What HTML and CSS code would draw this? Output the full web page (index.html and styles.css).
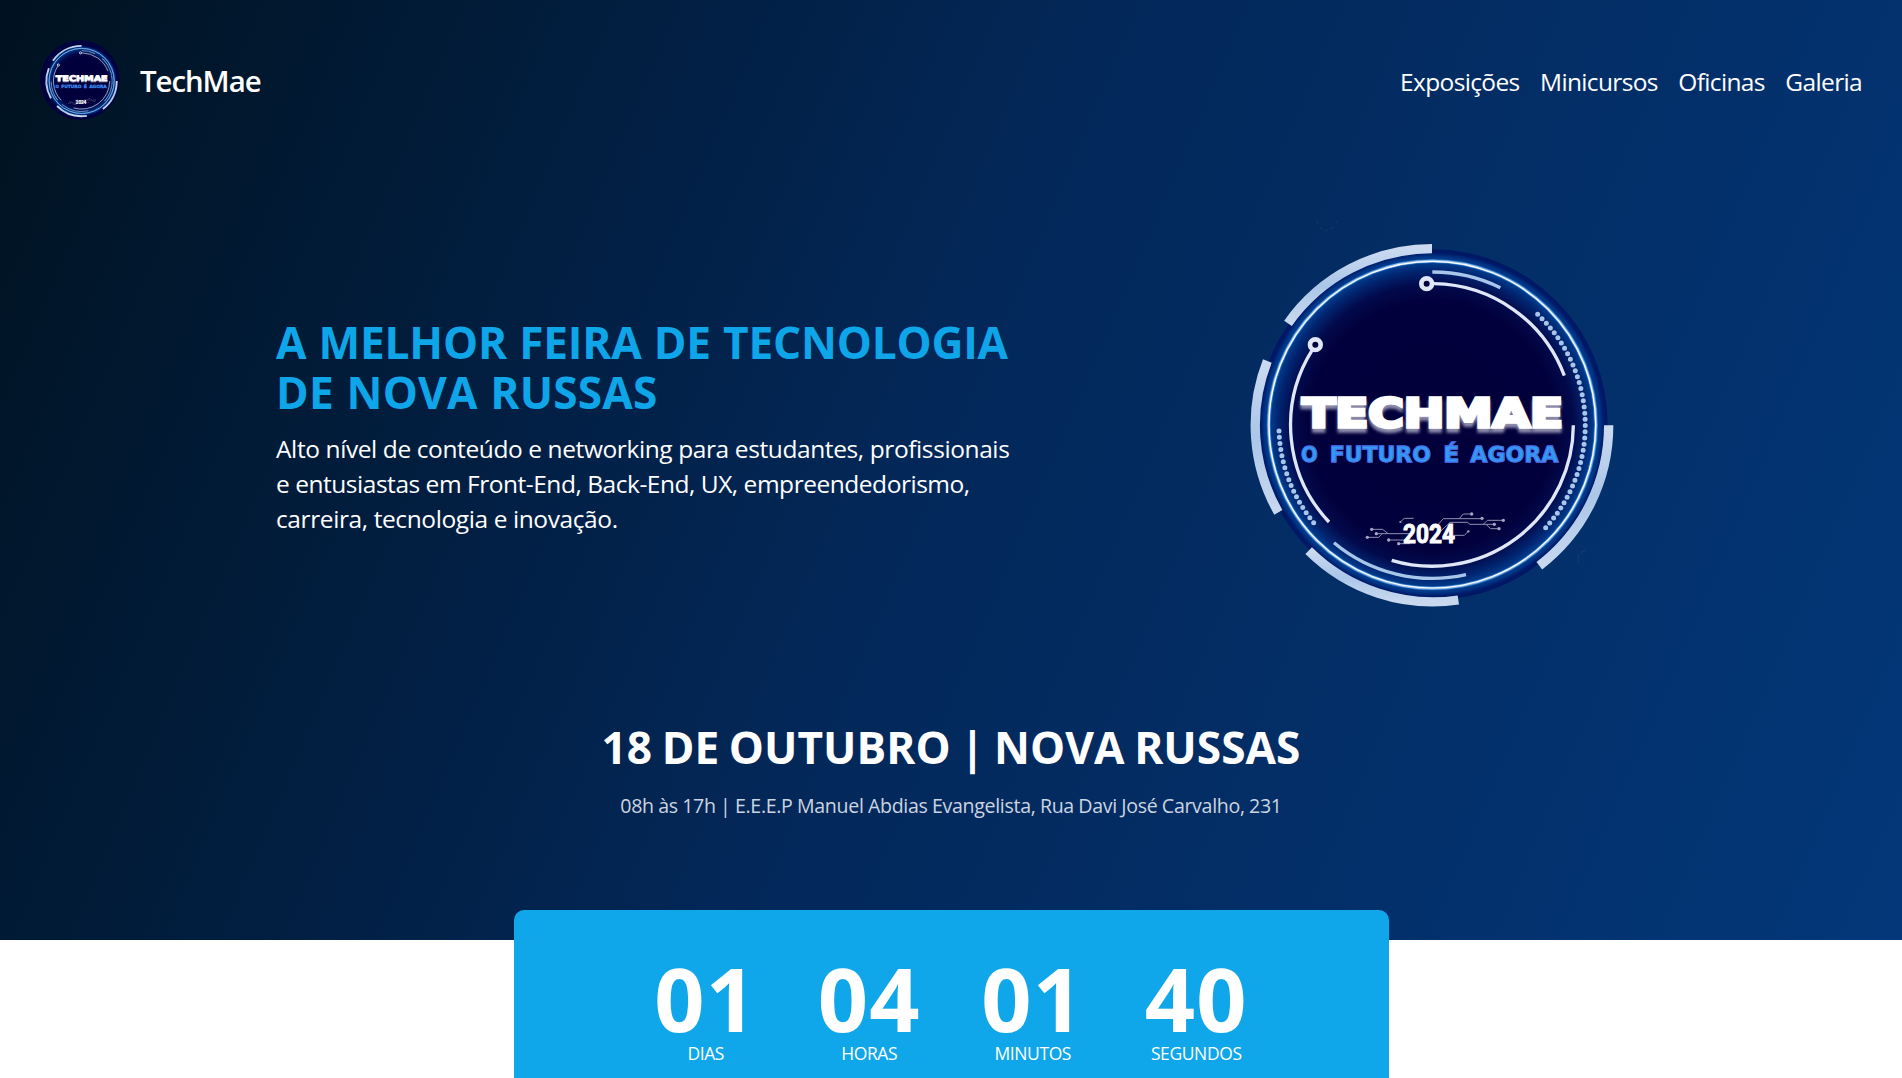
FILE: index.html
```html
<!DOCTYPE html>
<html lang="pt-BR">
<head>
<meta charset="utf-8">
<title>TechMae</title>
<link rel="stylesheet" href="styles.css">
</head>
<body>
<svg class="defs" width="0" height="0" aria-hidden="true">
  <defs>
    <radialGradient id="disc" gradientUnits="userSpaceOnUse" cx="607" cy="644" r="528">
      <stop offset="0" stop-color="#02003a"/>
      <stop offset=".7" stop-color="#02003c"/>
      <stop offset=".8" stop-color="#020a4c"/>
      <stop offset=".88" stop-color="#012672"/>
      <stop offset=".93" stop-color="#004294"/>
      <stop offset=".955" stop-color="#003484"/>
      <stop offset=".975" stop-color="#001a68"/>
      <stop offset="1" stop-color="#001663"/>
    </radialGradient>
    <linearGradient id="steel" x1="0" y1="0" x2="0" y2="1">
      <stop offset="0" stop-color="#cbdaf0"/>
      <stop offset=".5" stop-color="#abc6e8"/>
      <stop offset="1" stop-color="#c8d8ef"/>
    </linearGradient>
    <filter id="soft" x="-10%" y="-30%" width="120%" height="180%"><feGaussianBlur stdDeviation="4"/></filter>
    <g id="emblem">
      <circle cx="607" cy="644" r="526" fill="url(#disc)"/>
      <g fill="none">
        <circle cx="607" cy="644" r="491" stroke="#2a70c0" stroke-width="12"/>
        <circle cx="607" cy="644" r="491" stroke="#8fbdea" stroke-width="7"/>
        <circle cx="607" cy="644" r="490" stroke="#fff" stroke-width="3.500"/>
        <g stroke="url(#steel)" stroke-width="28">
          <path d="M606 116A529 529 0 0 0 174 340"/>
          <path d="M112 453A529 529 0 0 0 145 907"/>
          <path d="M236 1022A529 529 0 0 0 685 1170"/>
          <path d="M928 1067A529 529 0 0 0 1136 646"/>
        </g>
        <g stroke="#a8c5ea" stroke-width="10">
          <path d="M607 186A459 459 0 0 1 811 233"/>
          <path d="M312 998A460 460 0 0 0 708 1094"/>
        </g>
        <g stroke="#dfe7f7" stroke-width="10">
          <path d="M612 221A424 424 0 0 1 1003 497"/>
          <path d="M246 421A424 424 0 0 0 297 936"/>
          <path d="M1030 646A424 424 0 0 1 485 1051"/>
        </g>
        <g stroke="#dfe7f7" stroke-width="14" fill="#02003c">
          <circle cx="590" cy="221" r="16"/>
          <circle cx="256" cy="404" r="16"/>
        </g>
        <g stroke="#a8c5ea" stroke-width="15" stroke-linecap="round">
          <path pathLength="38.010" stroke-dasharray="0 1" d="M923 313A458 458 0 0 1 947 953"/>
          <path pathLength="16.010" stroke-dasharray="0 1" d="M147 663A460 460 0 0 0 251 938"/>
        </g>
        <g stroke="#8d8fb0" stroke-width="3">
          <path d="M425 958H458L474 971H540M439 971L474 971M412 982H446L456 971M476 990H530M506 1001H540M511 936L523 925H551"/>
          <path d="M610 960L640 926H756M688 926L700 912H725M620 975L660 937H712L720 943H793M760 943L772 931H820M768 943L782 956H807M670 976H703L715 964"/>
        </g>
      </g>
      <g fill="#a3a5c2">
        <circle cx="425" cy="958" r="5"/><circle cx="439" cy="971" r="5"/><circle cx="412" cy="982" r="5"/>
        <circle cx="476" cy="990" r="5"/><circle cx="506" cy="1001" r="5"/><circle cx="511" cy="936" r="3"/>
        <circle cx="725" cy="912" r="5"/><circle cx="756" cy="925" r="5"/><circle cx="793" cy="943" r="5"/>
        <circle cx="820" cy="931" r="5"/><circle cx="807" cy="956" r="5"/><circle cx="715" cy="964" r="3.500"/>
      </g>
      <text class="word word-shadow" x="217" y="662" textLength="782" lengthAdjust="spacingAndGlyphs" filter="url(#soft)">TECHMAE</text>
      <text class="word" x="217" y="650" textLength="782" lengthAdjust="spacingAndGlyphs">TECHMAE</text>
      <g class="motto">
        <text x="213" y="755" textLength="50" lengthAdjust="spacingAndGlyphs">O</text>
        <text x="299" y="755" textLength="304" lengthAdjust="spacingAndGlyphs">FUTURO</text>
        <text x="640" y="755" textLength="48" lengthAdjust="spacingAndGlyphs">É</text>
        <text x="721" y="755" textLength="264" lengthAdjust="spacingAndGlyphs">AGORA</text>
      </g>
      <text class="year" x="519" y="999" textLength="156" lengthAdjust="spacingAndGlyphs">2024</text>
    </g>
  </defs>
</svg>

<div class="hero">
  <header class="topbar">
    <a class="brand">
      <svg class="brand-logo" viewBox="-21 27 1206 1206"><circle cx="582" cy="630" r="603" fill="#02023f"/><use href="#emblem"/></svg>
      <span>TechMae</span>
    </a>
    <nav class="nav"><a>Exposições</a><a>Minicursos</a><a>Oficinas</a><a>Galeria</a></nav>
  </header>

  <section class="intro">
    <div class="intro-text">
      <h1>A MELHOR FEIRA DE TECNOLOGIA<br><span class="loose">DE NOVA RUSSAS</span></h1>
      <p>Alto nível de conteúdo e networking para estudantes, profissionais<br>
      <span class="tight">e entusiastas em Front-End, Back-End, UX, empreendedorismo,</span><br>
      carreira, tecnologia e inovação.</p>
    </div>
    <svg class="intro-logo" viewBox="30 0 1158 1230">
      <path d="M262 35V42M270 53L278 60M284 62H292M300 58L312 51M320 33V38M1046 1056V1034M1052 1028L1068 1020" stroke="#3a4a80" stroke-width="2" fill="none" opacity=".6"/>
      <use href="#emblem"/>
    </svg>
  </section>

  <section class="event">
    <h2>18 DE OUTUBRO | NOVA RUSSAS</h2>
    <p>08h às 17h | E.E.E.P Manuel Abdias Evangelista, Rua Davi José Carvalho, 231</p>
  </section>
</div>

<section class="countdown">
  <div class="unit"><strong>01</strong><span>DIAS</span></div>
  <div class="unit"><strong>04</strong><span>HORAS</span></div>
  <div class="unit"><strong>01</strong><span>MINUTOS</span></div>
  <div class="unit"><strong>40</strong><span>SEGUNDOS</span></div>
</section>
</body>
</html>
```
FILE: styles.css
```css
* { box-sizing: border-box; margin: 0; padding: 0; }

html, body { height: 100%; overflow: hidden; }

body {
  background: #fff;
  color: #fff;
  font-family: "Segoe UI", "Open Sans", "Noto Sans", sans-serif;
}

.defs { position: absolute; }

.hero {
  height: 940px;
  background: linear-gradient(113deg, #001220 0%, #03285a 50%, #033779 100%);
}

.topbar {
  display: flex;
  justify-content: space-between;
  align-items: center;
  padding: 40px 40px 0;
}

.brand {
  display: flex;
  align-items: center;
  gap: 20px;
  font-size: 29.4px;
  font-weight: 600;
  letter-spacing: -1.05px;
}

.brand span { padding-top: 2px; }

.brand-logo { width: 80px; height: 80px; border-radius: 50%; display: block; }

.nav {
  display: flex;
  gap: 20.5px;
  padding-top: 3px;
  font-size: 24.5px;
  letter-spacing: -.65px;
}

.intro {
  width: 1350px;
  margin: 90px auto 0;
  display: flex;
  justify-content: space-between;
  align-items: center;
}

.intro-text { padding-top: 23px; white-space: nowrap; }
.intro-logo { width: 386px; height: 410px; display: block; }

h1, h2 {
  font-size: 44.2px;
  line-height: 50px;
  font-weight: 700;
}

h1 { color: #0ea5e9; margin-bottom: 14px; letter-spacing: -.2px; word-spacing: 1px; }
h1 .loose { letter-spacing: .2px; }

.intro-text p {
  font-size: 24.5px;
  line-height: 35px;
  letter-spacing: -.4px;
}
.intro-text .tight { letter-spacing: -.47px; }

.event { margin-top: 102px; text-align: center; }
.event h2 { letter-spacing: .05px; word-spacing: -2px; }
.event p {
  margin-top: 19px;
  font-size: 19.6px;
  line-height: 30px;
  letter-spacing: -.33px;
  word-spacing: -.3px;
  color: #cbd5e1;
}

.countdown {
  position: relative;
  width: 875px;
  height: 210px;
  margin: -30px auto 0;
  padding-top: 43px;
  display: flex;
  justify-content: center;
  gap: 60px;
  border-radius: 10px;
  background: #10a6ea;
}

.unit { width: 103.5px; display: flex; flex-direction: column; align-items: center; }
.unit strong { font-size: 88px; line-height: 90px; letter-spacing: 1.3px; }
.unit span { margin-top: -2px; font-size: 17.5px; line-height: 25px; letter-spacing: -.4px; }

.word {
  font: 700 118px "DejaVu Sans", sans-serif;
  fill: #fff;
  stroke: #fff;
  stroke-width: 10px;
}
.word-shadow { fill: #8d8cab; stroke: #8d8cab; }

.motto {
  font: 700 66px "DejaVu Sans", sans-serif;
  fill: #2ba0f2;
  stroke: #4a76f0;
  stroke-width: 4px;
}

.year {
  font: 700 80px Roboto, sans-serif;
  fill: #fff;
  stroke: #fff;
  stroke-width: 3px;
}
```
